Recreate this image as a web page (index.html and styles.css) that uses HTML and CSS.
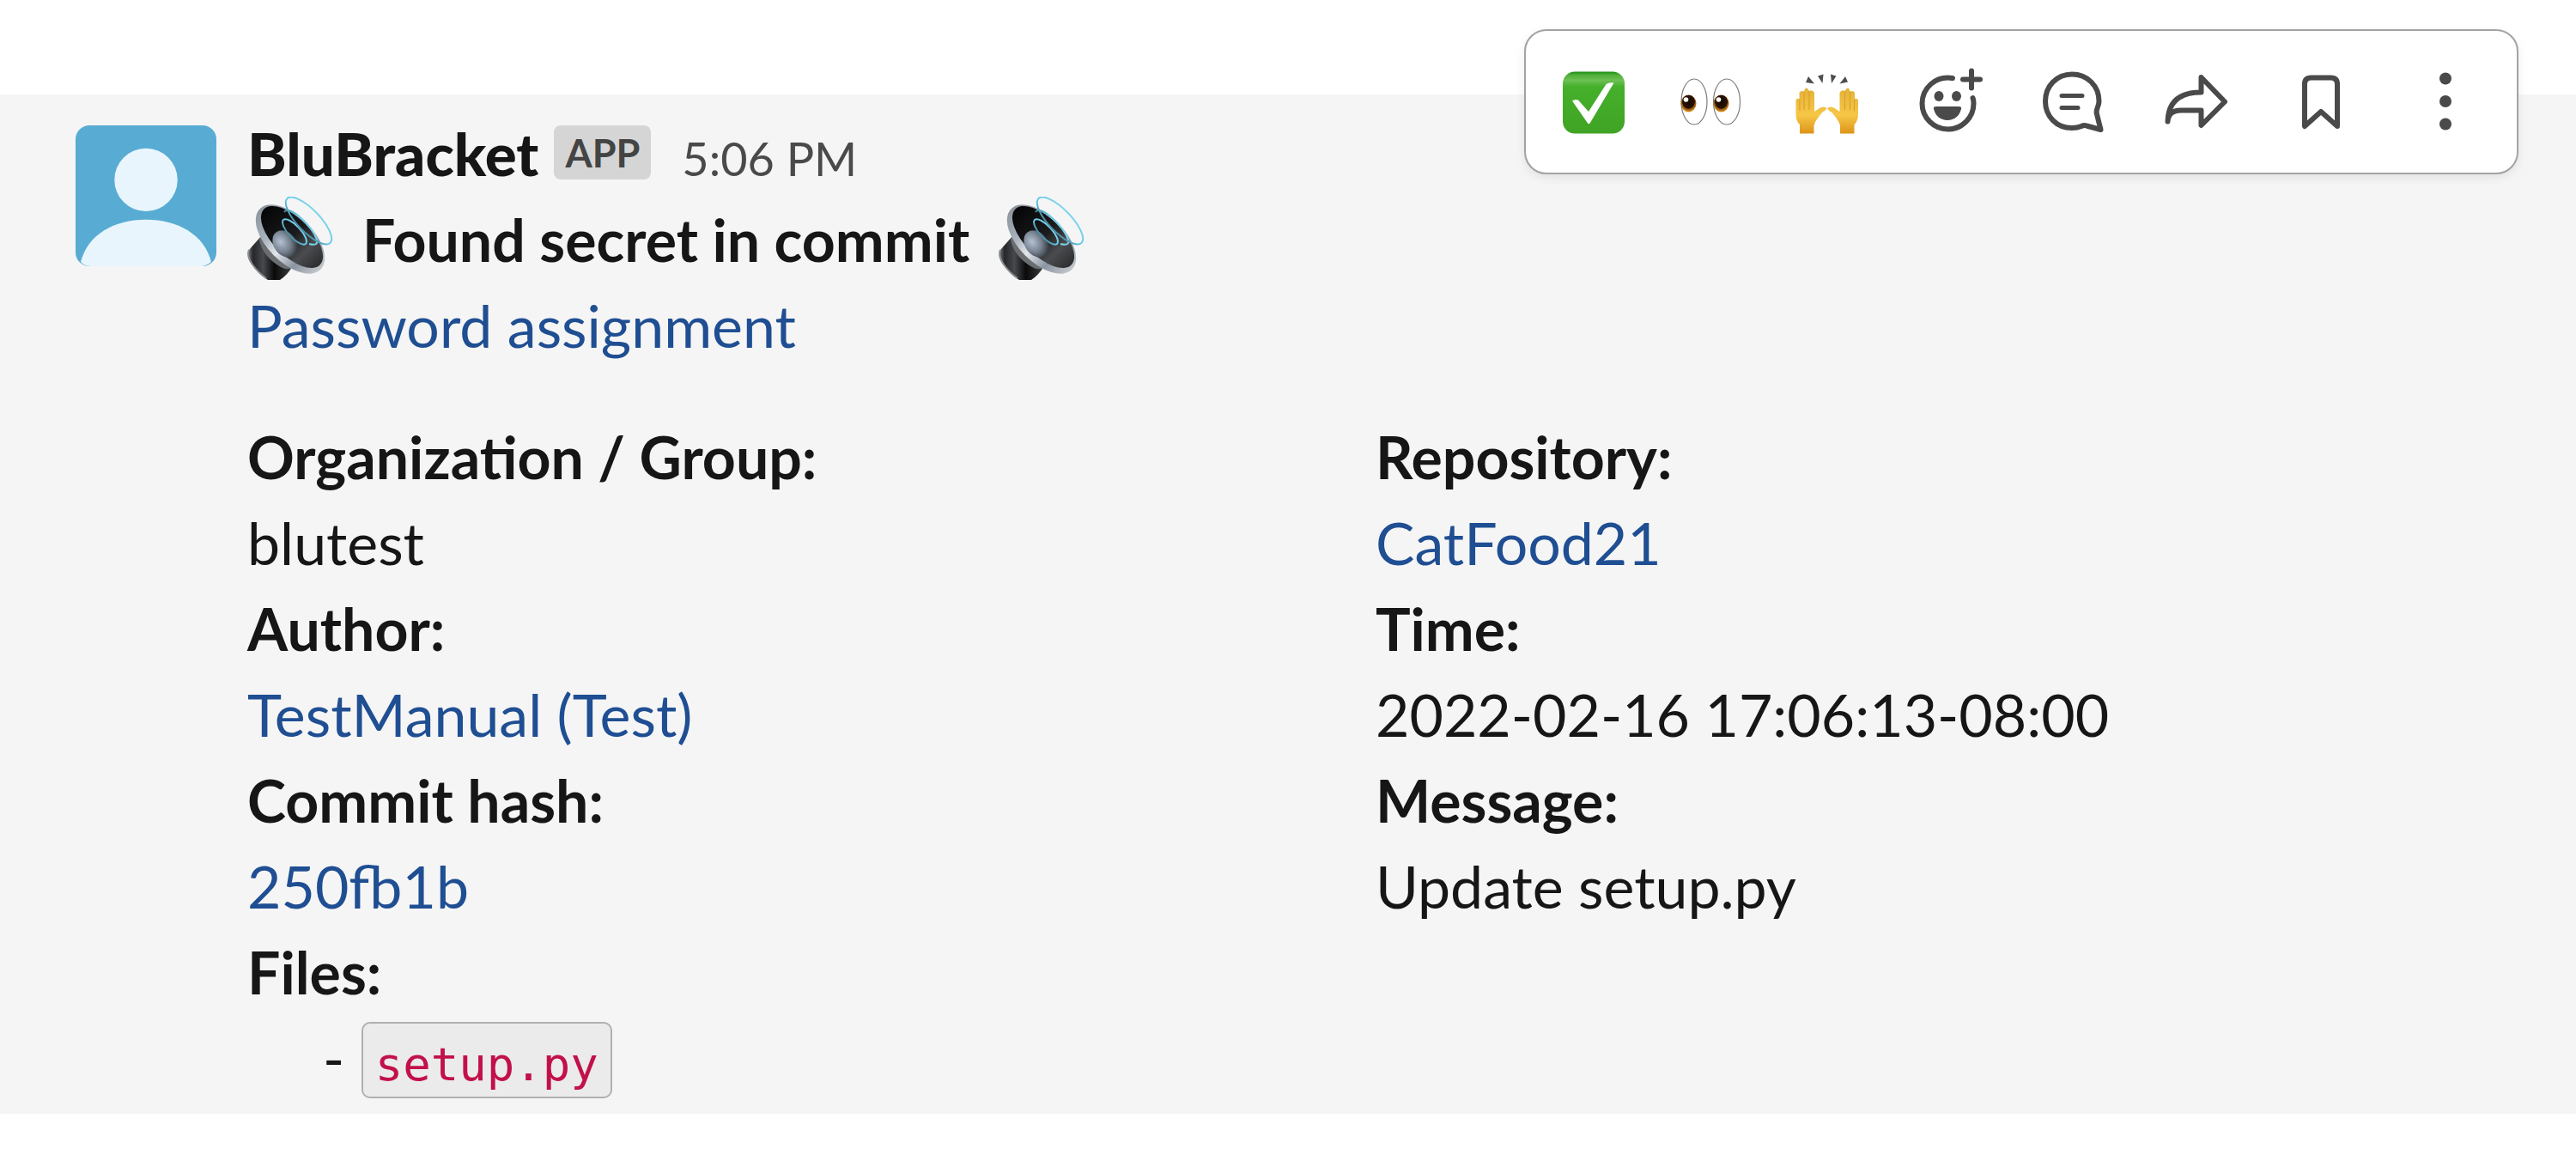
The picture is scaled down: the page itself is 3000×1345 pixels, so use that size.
FILE: index.html
```html
<!DOCTYPE html>
<html lang="en">
<head>
<meta charset="utf-8">
<title>BluBracket alert</title>
<link rel="stylesheet" href="styles.css">
</head>
<body>
<svg class="defs" aria-hidden="true">
  <defs>
    <linearGradient id="rim" x1="0" y1="0" x2="0" y2="1">
      <stop offset="0" stop-color="#8d959d"/><stop offset=".3" stop-color="#aab4be"/><stop offset=".5" stop-color="#e2e6ea"/><stop offset=".75" stop-color="#8a95a2"/><stop offset="1" stop-color="#c4c8cc"/>
    </linearGradient>
    <linearGradient id="cone" x1="0" y1="0" x2="0" y2="1">
      <stop offset="0" stop-color="#060607"/><stop offset=".5" stop-color="#1a1b1d"/><stop offset=".75" stop-color="#4b4c4f"/><stop offset="1" stop-color="#2c2d2f"/>
    </linearGradient>
    <linearGradient id="magnet" x1="0" y1="0" x2="1" y2="0">
      <stop offset="0" stop-color="#77797c"/><stop offset=".12" stop-color="#26272a"/><stop offset=".35" stop-color="#47494d"/><stop offset=".6" stop-color="#0a0a0b"/><stop offset="1" stop-color="#3c3d40"/>
    </linearGradient>
    <radialGradient id="dome" cx=".4" cy=".35" r=".65">
      <stop offset="0" stop-color="#b4c1d2"/><stop offset=".6" stop-color="#76818f"/><stop offset="1" stop-color="#3b4047"/>
    </radialGradient>
    <linearGradient id="wave" x1="0" y1="0" x2="1" y2="0">
      <stop offset="0" stop-color="#4b8ca3"/><stop offset=".4" stop-color="#62c8e6"/><stop offset="1" stop-color="#7ed4ec"/>
    </linearGradient>
    <symbol id="speaker" viewBox="0 0 100 100">
      <path d="M17 45 L2 62 Q-2 70 6 80 Q14 91 24 97 H38 Q47 91 52 82 Z" fill="url(#magnet)"/>
      <path d="M2 62Q-1 69 6 79Q13 89 22 95" fill="none" stroke="#8b8d90" stroke-width="2"/>
      <path d="M17 44 Q24 66 52 83 Q46 86 39 82 Q18 70 14 50Z" fill="#6b6d70"/>
      <ellipse cx="50" cy="49.500" rx="27" ry="50" transform="rotate(-45 50 49.500)" fill="url(#rim)"/>
      <ellipse cx="52" cy="47" rx="22" ry="46" transform="rotate(-45 52 47)" fill="url(#cone)"/>
      <ellipse cx="44" cy="55" rx="13" ry="17" transform="rotate(-38 44 55)" fill="url(#dome)"/>
      <g fill="none" stroke="url(#wave)" stroke-width="2">
        <ellipse cx="55" cy="41" rx="7" ry="19" transform="rotate(-43 55 41)"/>
        <path d="M43 18 Q46 13 58 21 Q76 36 81 50 Q83 58 72 55"/>
        <ellipse cx="71.500" cy="28" rx="13" ry="36" transform="rotate(-44 71.500 28)"/>
      </g>
    </symbol>
    <linearGradient id="green" x1="0" y1="0" x2="0" y2="1">
      <stop offset="0" stop-color="#128a0c"/><stop offset=".05" stop-color="#4fae38"/><stop offset=".14" stop-color="#6cc052"/><stop offset=".24" stop-color="#45b02b"/><stop offset="1" stop-color="#40a324"/>
    </linearGradient>
    <radialGradient id="iris" cx=".5" cy=".4" r=".6">
      <stop offset="0" stop-color="#160a03"/><stop offset=".65" stop-color="#2a1204"/><stop offset=".7" stop-color="#8d510f"/><stop offset="1" stop-color="#e29a28"/>
    </radialGradient>
    <linearGradient id="skin" x1="0" y1="0" x2="0" y2="1">
      <stop offset="0" stop-color="#e3b23a"/><stop offset=".6" stop-color="#f6c646"/><stop offset="1" stop-color="#dc9417"/>
    </linearGradient>
  </defs>
</svg>

<main class="channel">
  <article class="message">
    <svg class="avatar" viewBox="0 0 163 163" role="img" aria-label="BluBracket avatar">
      <path d="M16 0H147A16 16 0 0 1 163 16V147A16 16 0 0 1 147 163H16A16 16 0 0 1 0 147V16A16 16 0 0 1 16 0Z" fill="#58acd3"/>
      <circle cx="81.500" cy="63" r="36.500" fill="#e9f5fd"/>
      <path d="M6 158C14 126 45 109 81.500 109S149 126 157 158Q151 163 145 163H18Q10 163 6 158Z" fill="#e9f5fd"/>
    </svg>
    <div class="content">
      <header class="meta">
        <span class="sender">BluBracket</span>
        <span class="badge">APP</span>
        <time class="time">5:06 PM</time>
      </header>
      <h1 class="title">
        <svg class="emoji" role="img" aria-label="speaker"><use href="#speaker"/></svg>
        <span>Found secret in commit</span>
        <svg class="emoji" role="img" aria-label="speaker"><use href="#speaker"/></svg>
      </h1>
      <p class="line"><a href="#secret">Password assignment</a></p>
      <div class="fields">
        <dl class="column">
          <dt>Organization / Group:</dt><dd>blutest</dd>
          <dt>Author:</dt><dd><a href="#author">TestManual (Test)</a></dd>
          <dt>Commit hash:</dt><dd><a href="#commit">250fb1b</a></dd>
          <dt>Files:</dt><dd class="file">- <code>setup.py</code></dd>
        </dl>
        <dl class="column">
          <dt>Repository:</dt><dd><a href="#repo">CatFood21</a></dd>
          <dt>Time:</dt><dd>2022-02-16 17:06:13-08:00</dd>
          <dt>Message:</dt><dd>Update setup.py</dd>
        </dl>
      </div>
    </div>
    <div class="toolbar" role="toolbar" aria-label="Message actions">
      <button class="reaction" type="button" aria-label="Completed">
        <svg viewBox="0 0 80 80"><rect x="4" y="4.500" width="72" height="72" rx="14" fill="url(#green)"/><path d="M15 38.500Q18 36 22 37.500L34 51 54.500 19Q58 16.500 63.500 17.500L36.500 63Q34.500 67.500 32 63Z" fill="#fff"/></svg>
      </button>
      <button class="reaction" type="button" aria-label="Looking">
        <svg viewBox="0 0 80 80"><g fill="#fff" stroke="#7d7d7d" stroke-width="1.200"><ellipse cx="21" cy="39.500" rx="15" ry="26.500"/><ellipse cx="59" cy="39.500" rx="15.500" ry="26.500"/></g><g fill="url(#iris)"><ellipse cx="14.500" cy="41.500" rx="9" ry="10"/><ellipse cx="52.500" cy="41.500" rx="9" ry="10"/></g><g fill="#fff"><circle cx="11.500" cy="37" r="2.800"/><circle cx="49.500" cy="37" r="2.800"/></g></svg>
      </button>
      <button class="reaction" type="button" aria-label="Nicely done">
        <svg viewBox="0 0 80 80"><g fill="#4e4e4e"><path d="M18 10 15 17 25 18.500Z"/><path d="M29 9.500 35.500 7.500 34.500 18Z"/><path d="M44 7.500 50.500 9.500 45 18Z"/><path d="M61 10 64 16.500 54.500 18.500Z"/></g><path id="hand" d="M8 76.500V66Q3.500 62 3.500 54V38Q4 35 7.500 36V29Q9 26 13 27.500Q15 20 19 27Q23 25 25 29V51L31 47Q36 44 39.500 47Q38 50 34 52Q29 58 26 63L24.500 67V76.500Z" fill="url(#skin)"/><use href="#hand" transform="matrix(-1 0 0 1 79.500 0)"/><path d="M8 37V50M13 28V49M19 27V49M71.500 37V50M66.500 28V49M60.500 27V49" stroke="#d99b25" stroke-width="1" fill="none"/></svg>
      </button>
      <button class="action" type="button" aria-label="Add reaction">
        <svg viewBox="0 0 80 80"><g fill="none" stroke="#4a4a4a" stroke-width="6" stroke-linecap="round"><path d="M42 12C22 8.500 6.500 24 6.500 41.500A30 30 0 0 0 66.500 41.500Q66.500 38 65.500 35"/><path d="M64 3.500V23.500M54 13.500H74"/></g><g fill="#4a4a4a"><ellipse cx="26" cy="33" rx="5.500" ry="6"/><ellipse cx="46.500" cy="33" rx="5.500" ry="6"/><path d="M23 45H49Q53 45 52 48C50 56 44 61 36 61S22 56 20 48Q19 45 23 45Z"/></g></svg>
      </button>
      <button class="action" type="button" aria-label="Reply in thread">
        <svg viewBox="0 0 80 80"><g fill="none" stroke="#4a4a4a" stroke-width="6" stroke-linejoin="round" stroke-linecap="round"><path d="M37 7.500C55 7.500 68.500 21 68.500 39Q68.500 42 66.500 47 65 51 66 54L70.500 72 54 67.500Q51 66.500 48 68 43 70 37 70C19 70 6 56.500 6 39S19 7.500 37 7.500Z"/></g><path d="M25 32.500H49M25 46.500H44" stroke="#4a4a4a" stroke-width="5" stroke-linecap="round"/></svg>
      </button>
      <button class="action" type="button" aria-label="Share message">
        <svg viewBox="0 0 80 80"><path d="M4.500 62.500C5 40 18 28.500 43.500 28.500V11L71 39.500 43.500 67V49.500H20Q5 49.500 4.500 62.500Z" fill="none" stroke="#4a4a4a" stroke-width="6" stroke-linejoin="round"/></svg>
      </button>
      <button class="action" type="button" aria-label="Save">
        <svg viewBox="0 0 80 80"><path d="M20 68V19Q20 11.500 27.500 11.500H50.500Q58 11.500 58 19V68L39 51Z" fill="none" stroke="#4a4a4a" stroke-width="6" stroke-linejoin="round"/></svg>
      </button>
      <button class="action" type="button" aria-label="More actions">
        <svg viewBox="0 0 80 80" fill="#4a4a4a"><circle cx="40" cy="12.500" r="7"/><circle cx="40" cy="39" r="7"/><circle cx="40" cy="65.500" r="7"/></svg>
      </button>
    </div>
  </article>
</main>
</body>
</html>
```
FILE: styles.css
```css
* {
  box-sizing: border-box;
}

body {
  margin: 0;
  background: #fff;
  color: #161616;
  font-family: Lato, "Liberation Sans", sans-serif;
  font-size: 68px;
  line-height: 100px;
}

.defs {
  position: absolute;
  width: 0;
  height: 0;
}

.channel {
  padding: 110px 0 48px;
}

.message {
  position: relative;
  display: flex;
  gap: 36px;
  padding: 19px 84px 15px 88px;
  background: #f5f5f5;
}

.avatar {
  flex: none;
  width: 164px;
  height: 164px;
  margin-top: 17px;
}

.content {
  flex: 1;
  min-width: 0;
}

.meta {
  display: flex;
  align-items: baseline;
  height: 100px;
}

.sender {
  font-size: 69px;
  font-weight: 900;
}

.badge {
  align-self: flex-start;
  margin: 17px 36px 0 18px;
  padding: 2px 13px 0;
  border-radius: 8px;
  background: #d5d5d5;
  color: #444;
  font-size: 45px;
  font-weight: 700;
  line-height: 61px;
}

.time {
  color: #4a4a4a;
  font-size: 54px;
}

.title {
  display: flex;
  align-items: center;
  gap: 34px;
  margin: 0;
  font-size: 68px;
  font-weight: 700;
}

.emoji {
  width: 100px;
  height: 100px;
}

.line {
  margin: 0;
}

a {
  color: #1f4e92;
  text-decoration: none;
}

.fields {
  display: grid;
  grid-template-columns: 1fr 1fr;
  margin-top: 53px;
}

.column {
  margin: 0;
}

dt {
  font-weight: 700;
}

dd {
  margin: 0;
}

.file {
  padding-left: 88px;
}

code {
  margin-left: 2px;
  padding: 16px 14px 6px;
  border: 2px solid #b0b0b0;
  border-radius: 10px;
  background: #ebebeb;
  color: #c2114a;
  font-family: "DejaVu Sans Mono", monospace;
  font-size: 54px;
  line-height: 60px;
}

.toolbar {
  position: absolute;
  top: -76px;
  right: 67px;
  display: flex;
  padding: 0 11px;
  height: 169px;
  border: 2px solid #a3a3a5;
  border-radius: 26px;
  background: #fff;
  box-shadow: 0 4px 12px rgba(0, 0, 0, 0.08);
}

.reaction,
.action {
  display: flex;
  align-items: center;
  justify-content: center;
  padding: 0;
  border: 0;
  background: none;
}

.reaction {
  width: 136px;
}

.action {
  width: 144px;
}

.reaction + .action {
  margin-left: 4px;
}

.toolbar svg {
  width: 80px;
  height: 80px;
}
```
